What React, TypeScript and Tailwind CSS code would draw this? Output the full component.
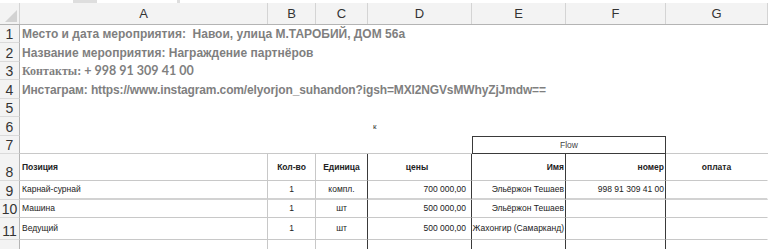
const COLS = ['A', 'B', 'C', 'D', 'E', 'F', 'G'];

const grid = 'grid grid-cols-[20px_248px_48px_52px_104px_94px_100px_102px]';

const RowHead = ({ n, h }: { n?: number; h: string }) => (
  <div className={`${h} flex items-end justify-center pb-[1px] bg-[#f3f3f3] border-r border-b border-r-[#b4b4b4] border-b-[#dadada] text-[14px] leading-none text-[#333]`}>
    {n}
  </div>
);

const Info = ({ n, h, children, tight }: { n: number; h: string; children: React.ReactNode; tight?: boolean }) => (
  <div className={grid}>
    <RowHead n={n} h={h} />
    <div
      className={`${h} col-span-7 flex items-center pl-[2px] whitespace-nowrap text-[12px] font-bold text-[#7f7f7f] ${
        tight ? 'tracking-[-0.13px]' : ''
      }`}
    >
      {children}
    </div>
  </div>
);

type Cell = { t?: string; a?: 'l' | 'c' | 'r'; b?: boolean };

const align = { l: 'justify-start pl-[2px]', c: 'justify-center', r: 'justify-end pr-[1px]' };
const rightBorder = [
  'border-r-[#c8c8c8]',
  'border-r-[#c8c8c8]',
  'border-r-[#3a3a3a]',
  'border-r-[#3a3a3a]',
  'border-r-[#3a3a3a]',
  'border-r-[#3a3a3a]',
  'border-r-transparent',
];

const TableRow = ({ n, h, cells, bottom }: { n?: number; h: string; cells: Cell[]; bottom: string }) => (
  <div className={grid}>
    <RowHead n={n} h={h} />
    {cells.map((c, i) => (
      <div
        key={i}
        className={`${h} flex items-center overflow-visible whitespace-nowrap border-r ${rightBorder[i]} ${bottom} text-[8.5px] text-[#222] ${
          align[c.a ?? 'l']
        } ${c.b ? 'font-bold' : ''} ${i === 3 ? 'pr-[5px]' : ''}`}
      >
        {c.t}
      </div>
    ))}
  </div>
);

export default function App() {
  return (
    <div className="w-[768px] h-[249px] overflow-hidden bg-white font-['Liberation_Sans',Arial,sans-serif]">
      {/* tab strip */}
      <div className="flex h-[3px] bg-[#dedede]">
        <div className="w-[73px] bg-white" />
        <div className="w-[24px]" />
        <div className="w-[80px] bg-white" />
        <div className="w-[3px]" />
        <div className="flex-1 bg-white" />
      </div>

      {/* column letters */}
      <div className={`${grid} h-[22px] bg-[#f3f3f3] border-b border-[#b4b4b4] text-[13px] text-[#333]`}>
        <div className="flex items-end justify-end border-r border-[#d4d4d4]">
          <svg width="12" height="12" viewBox="0 0 12 12" className="mb-[2px] mr-[2px]">
            <path d="M12 0 L12 12 L0 12 Z" fill="#d2d2d2" />
          </svg>
        </div>
        {COLS.map((c) => (
          <div key={c} className="flex items-center justify-center border-r border-[#d4d4d4]">
            {c}
          </div>
        ))}
      </div>

      <Info n={1} h="h-[18px]">Место и дата мероприятия:&nbsp; Навои, улица М.ТАРОБИЙ, ДОМ 56а</Info>
      <Info n={2} h="h-[19px]">Название мероприятия: Награждение партнёров</Info>
      <Info n={3} h="h-[18px]">
        <span className="font-['Liberation_Serif',serif]">Контакты:</span>
        <span className="ml-[3px] font-['Lato',sans-serif] text-[12.5px]">+ 998 91 309 41 00</span>
      </Info>
      <Info n={4} h="h-[19px]" tight>
        Инстаграм: https://www.instagram.com/elyorjon_suhandon?igsh=MXl2NGVsMWhyZjJmdw==
      </Info>
      <Info n={5} h="h-[18px]">{''}</Info>

      {/* row 6 */}
      <div className={grid}>
        <RowHead n={6} h="h-[19px]" />
        <div className="col-span-3" />
        <div className="flex items-center pl-[5px] text-[8px] text-[#333]">к</div>
        <div className="col-span-3" />
      </div>

      {/* row 7 with Flow box */}
      <div className={grid}>
        <RowHead n={7} h="h-[18px]" />
        <div className="col-span-4 border-b border-[#c8c8c8]" />
        <div className="col-span-2 flex items-center justify-center border border-[#3a3a3a] text-[8.5px] text-[#444]">Flow</div>
        <div className="border-b border-[#c8c8c8]" />
      </div>

      <TableRow
        n={8}
        h="h-[27px]"
        bottom="border-b border-b-[#c8c8c8]"
        cells={[
          { t: 'Позиция', b: true },
          { t: 'Кол-во', a: 'c', b: true },
          { t: 'Единица', a: 'c', b: true },
          { t: 'цены', a: 'c', b: true },
          { t: 'Имя', a: 'r', b: true },
          { t: 'номер', a: 'r', b: true },
          { t: 'оплата', a: 'c', b: true },
        ]}
      />
      <TableRow
        n={9}
        h="h-[19px]"
        bottom="border-b-2 border-b-[#d2d2d2]"
        cells={[
          { t: 'Карнай-сурнай' },
          { t: '1', a: 'c' },
          { t: 'компл.', a: 'c' },
          { t: '700 000,00', a: 'r' },
          { t: 'Эльёржон Тешаев', a: 'r' },
          { t: '998 91 309 41 00', a: 'r' },
          {},
        ]}
      />
      <TableRow
        n={10}
        h="h-[18px]"
        bottom="border-b border-b-[#c8c8c8]"
        cells={[
          { t: 'Машина' },
          { t: '1', a: 'c' },
          { t: 'шт', a: 'c' },
          { t: '500 000,00', a: 'r' },
          { t: 'Эльёржон Тешаев', a: 'r' },
          {},
          {},
        ]}
      />
      <TableRow
        n={11}
        h="h-[22px]"
        bottom="border-b border-b-[#c8c8c8]"
        cells={[
          { t: 'Ведущий' },
          { t: '1', a: 'c' },
          { t: 'шт', a: 'c' },
          { t: '500 000,00', a: 'r' },
          { t: 'Жахонгир (Самарканд)', a: 'r' },
          {},
          {},
        ]}
      />
      <TableRow h="h-[20px]" bottom="" cells={[{}, {}, {}, {}, {}, {}, {}]} />
    </div>
  );
}
